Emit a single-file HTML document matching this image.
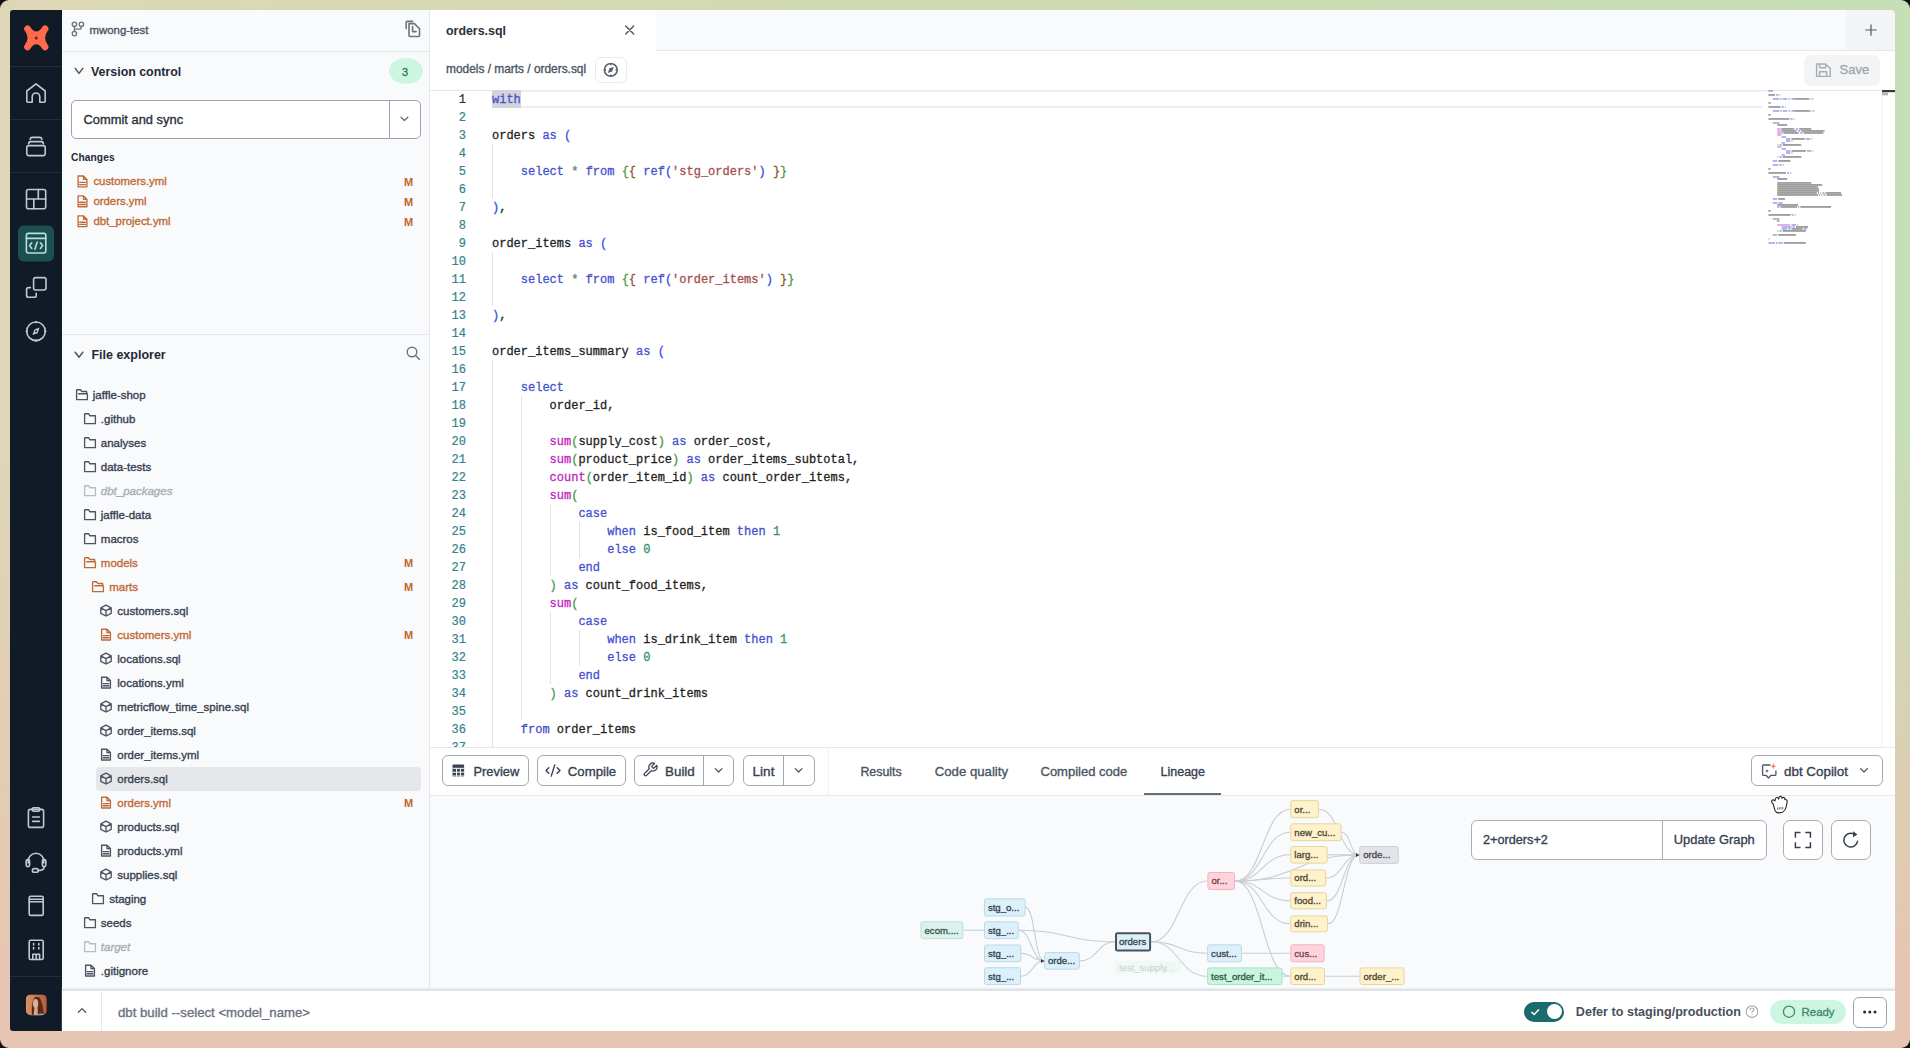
<!DOCTYPE html>
<html><head><meta charset="utf-8">
<style>
*{box-sizing:border-box;margin:0;padding:0}
html,body{width:1910px;height:1048px;overflow:hidden}
body{position:relative;font-family:"Liberation Sans",sans-serif;color:#1f2937;background:#111}
.bg{position:absolute;left:0;top:0;width:1910px;height:1048px;border-radius:9px;
background:linear-gradient(to bottom,rgba(230,198,178,0) 40%,#e6c6b2 92%),linear-gradient(to right,#ded7b6 0%,#cfdab2 50%,#c6dfb6 100%);}
.a{position:absolute}
.win{position:absolute;left:0;top:0;width:1910px;height:1048px;clip-path:inset(10px 15px 17px 10px round 3px 5px 4px 3px);}
.t{position:absolute;white-space:nowrap;line-height:24px;height:24px}
.sb{-webkit-text-stroke:0.35px currentColor}
.mono{font-family:"Liberation Mono",monospace}
svg{position:absolute;overflow:visible}
</style></head>
<body>
<div class="bg"></div>
<div class="win">
  <!-- sidebar -->
  <div class="a" style="left:10px;top:10px;width:52px;height:1021px;background:#111a27"></div>
  <!-- left panel -->
  <div class="a" style="left:62px;top:10px;width:368px;height:981px;background:#f9fafb;border-right:1px solid #e5e7eb"></div>
  <!-- tab bar -->
  <div class="a" style="left:430px;top:10px;width:1465px;height:41px;background:#f9fafb;border-bottom:1px solid #e5e7eb"></div>
  <div class="a" style="left:430px;top:10px;width:226px;height:41px;background:#fff"></div>
  <div class="a" style="left:1846px;top:10px;width:49px;height:40px;background:#f3f4f6"></div>
  <!-- breadcrumb row -->
  <div class="a" style="left:430px;top:51px;width:1465px;height:39px;background:#fff"></div>
  <!-- editor -->
  <div class="a" style="left:430px;top:90px;width:1465px;height:657px;background:#fff;border-top:1px solid #e5e7eb"></div>
  <!-- bottom toolbar -->
  <div class="a" style="left:430px;top:747px;width:1465px;height:49px;background:#fff;border-top:1px solid #e5e7eb;border-bottom:1px solid #e5e7eb"></div>
  <!-- lineage area -->
  <div class="a" style="left:430px;top:796px;width:1465px;height:195px;background:#f9fafb"></div>
  <!-- status bar -->
  <div class="a" style="left:62px;top:989px;width:1833px;height:42px;background:#fff;border-top:2px solid #e0e3e6;box-shadow:0 -1px 1px #eceef0"></div>

  <!-- sidebar icons -->
  <svg class="a" style="left:0;top:0" width="1910" height="1048" viewBox="0 0 1910 1048">
    <path d="M29.8,26.3 Q36.3,36.9 42.8,26.3 A3.4,3.4 0 0 1 47.6,31.1 Q42.6,37.9 47.6,44.7 A3.4,3.4 0 0 1 42.8,49.5 Q36.3,39.1 29.8,49.5 A3.4,3.4 0 0 1 25,44.7 Q30,37.9 25,31.1 A3.4,3.4 0 0 1 29.8,26.3 Z" fill="#fe6a4a"/>
    <circle cx="36.3" cy="38" r="1.6" fill="#6e2618"/>
    <g stroke="#222d3d" stroke-width="1">
      <line x1="10" y1="66.5" x2="62" y2="66.5"/><line x1="10" y1="119.5" x2="62" y2="119.5"/><line x1="10" y1="172.5" x2="62" y2="172.5"/><line x1="10" y1="976.5" x2="62" y2="976.5"/>
    </g>
    <rect x="18" y="225.5" width="36" height="36" rx="6" fill="#1c4f50"/>
    <g fill="none" stroke="#c3c7ce" stroke-width="1.6" stroke-linecap="round" stroke-linejoin="round">
      <path d="M26.8,91 L36,83.8 L45.2,91 L45.2,101.3 Q45.2,102.3 44.2,102.3 L39.8,102.3 L39.8,96.8 A3.8,3.8 0 0 0 32.2,96.8 L32.2,102.3 L27.8,102.3 Q26.8,102.3 26.8,101.3 Z"/>
      <rect x="26.8" y="145.6" width="18.4" height="10" rx="2"/>
      <path d="M28.6,144 Q28.6,141.6 31,141.6 L41,141.6 Q43.4,141.6 43.4,144"/>
      <path d="M30.2,139.6 Q30.2,137.4 32.4,137.4 L39.6,137.4 Q41.8,137.4 41.8,139.6"/>
      <rect x="26.5" y="189.5" width="19.2" height="19.2" rx="2"/>
      <path d="M26.5,199 L45.7,199 M38.3,189.5 L38.3,199 M33.8,199 L33.8,208.7"/>
      <rect x="33.6" y="277.6" width="12.4" height="12.4" rx="2"/>
      <path d="M30.4,287.6 L28.4,287.6 Q26.6,287.6 26.6,289.4 L26.6,295.4 Q26.6,297.2 28.4,297.2 L34.4,297.2 Q36.2,297.2 36.2,295.4 L36.2,293.4"/>
      <circle cx="36" cy="331.3" r="9.3"/>
      <rect x="28.4" y="809.4" width="15.2" height="18" rx="2"/>
      <rect x="32.2" y="807.8" width="7.6" height="3.4" rx="1.5"/>
      <path d="M32.6,817 L39.4,817 M32.6,821.4 L39.4,821.4"/>
      <path d="M28.2,863 L28.2,861 A7.8,7.8 0 0 1 43.8,861 L43.8,863"/>
      <rect x="26.2" y="859.6" width="3.4" height="7" rx="1.5"/>
      <rect x="42.4" y="859.6" width="3.4" height="7" rx="1.5"/>
      <path d="M44,866.6 Q44,870.4 40.2,870.4 L38.2,870.4"/>
      <rect x="32.4" y="868.6" width="5.8" height="3.6" rx="1.8"/>
      <rect x="29.2" y="896.2" width="14" height="19.2" rx="1.5"/>
      <path d="M29.2,899.2 L43.2,899.2 M29.2,901.8 L43.2,901.8"/>
      <rect x="29.2" y="940.3" width="14" height="19.2" rx="1.5"/>
      <path d="M33.6,943.5 L33.6,945 M33.6,947.5 L33.6,949 M38.8,943.5 L38.8,945 M38.8,947.5 L38.8,949 M32.8,959.4 L32.8,954.2 L39.6,954.2 L39.6,959.4 M36.2,954.2 L36.2,959.4"/>
    </g>
    <g fill="none" stroke="#b9dfdf" stroke-width="1.6" stroke-linecap="round" stroke-linejoin="round">
      <rect x="26.4" y="233.4" width="19.4" height="19.6" rx="2"/>
      <path d="M26.4,238.4 L45.8,238.4 M31.8,242.8 L29.6,245.6 L31.8,248.4 M40.4,242.8 L42.6,245.6 L40.4,248.4 M37.2,242 L34.9,249.2"/>
    </g>
    <path d="M39.6,327.6 L37.6,333.2 L32.4,335 L34.4,329.4 Z" fill="#c3c7ce"/>
    <circle cx="36" cy="331.3" r="1" fill="#111a27"/>
    <g fill="#c3c7ce"><rect x="35.2" y="321" width="1.6" height="2.2"/><rect x="35.2" y="339.4" width="1.6" height="2.2"/><rect x="25.7" y="330.5" width="2.2" height="1.6"/><rect x="44.1" y="330.5" width="2.2" height="1.6"/></g>
    <defs><linearGradient id="av" x1="0" y1="0" x2="1" y2="0"><stop offset="0" stop-color="#dc9262"/><stop offset="0.5" stop-color="#c97a50"/><stop offset="1" stop-color="#b8593a"/></linearGradient><clipPath id="avc"><rect x="25.8" y="994.4" width="21" height="20.8" rx="5"/></clipPath></defs>
    <g clip-path="url(#avc)">
    <rect x="25.8" y="994.4" width="21" height="20.8" fill="url(#av)"/>
    <path d="M32,1016 Q31,1004 34,998 Q37,995.5 40,998 Q43,1004 44,1016 Z" fill="#5a2a1c"/>
    <ellipse cx="35.6" cy="1003.5" rx="2.6" ry="4.6" fill="#ddb08e"/>
    <path d="M33.5,1016 L34.5,1007 L37.5,1007 L38,1016 Z" fill="#d7a88a"/>
    <ellipse cx="41" cy="1016" rx="4" ry="2.6" fill="#98a0b0"/>
    <ellipse cx="31" cy="1016.5" rx="3" ry="2" fill="#8f9cb0"/>
    </g>
  </svg>

  <!-- left panel content -->
  <div class="a" style="left:62px;top:50.5px;width:368px;height:1px;background:#e5e7eb"></div>
  <div class="a" style="left:62px;top:334px;width:368px;height:1px;background:#e5e7eb"></div>
  <div class="a" style="left:95.5px;top:767px;width:325px;height:23.5px;background:#e5e7eb;border-radius:4px"></div>
  <div class="t sb" style="left:89.5px;top:18px;font-size:11.4px;color:#4b5563">mwong-test</div>
  <div class="t" style="left:91px;top:60px;font-size:12.4px;font-weight:700;color:#1f2937">Version control</div>
  <div class="a" style="left:389px;top:58px;width:34px;height:26px;border-radius:50%;background:#cdf6e2"></div>
  <div class="t sb" style="left:402px;top:59.5px;font-size:11px;color:#2f7a5c">3</div>
  <div class="a" style="left:71px;top:99.5px;width:349.5px;height:39px;background:#fff;border:1.5px solid #9ca3af;border-radius:5px"></div>
  <div class="a" style="left:388.5px;top:100px;width:1.5px;height:38px;background:#9ca3af"></div>
  <div class="t sb" style="left:83.5px;top:108px;font-size:12.9px;color:#2b313a">Commit and sync</div>
  <div class="t" style="left:71px;top:145.5px;font-size:10.2px;font-weight:700;color:#1f2937;letter-spacing:0.1px">Changes</div>
  <div class="t" style="left:91.4px;top:343px;font-size:12.5px;font-weight:700;color:#1f2937">File explorer</div>
  <div class="t sb" style="left:92.8px;top:383.1px;font-size:11.5px;color:#374151;">jaffle-shop</div><div class="t sb" style="left:100.8px;top:407.1px;font-size:11.5px;color:#374151;">.github</div><div class="t sb" style="left:100.8px;top:431.1px;font-size:11.5px;color:#374151;">analyses</div><div class="t sb" style="left:100.8px;top:455.1px;font-size:11.5px;color:#374151;">data-tests</div><div class="t sb" style="left:100.8px;top:479.1px;font-size:11.5px;color:#a9aeb6;font-style:italic;">dbt_packages</div><div class="t sb" style="left:100.8px;top:503.1px;font-size:11.5px;color:#374151;">jaffle-data</div><div class="t sb" style="left:100.8px;top:527.1px;font-size:11.5px;color:#374151;">macros</div><div class="t sb" style="left:100.8px;top:551.1px;font-size:11.5px;color:#c06a36;">models</div><div class="t" style="left:404px;top:551.4px;font-size:11px;font-weight:700;color:#c0652c">M</div><div class="t sb" style="left:109.2px;top:575.1px;font-size:11.5px;color:#c06a36;">marts</div><div class="t" style="left:404px;top:575.4px;font-size:11px;font-weight:700;color:#c0652c">M</div><div class="t sb" style="left:117.3px;top:599.1px;font-size:11.5px;color:#374151;">customers.sql</div><div class="t sb" style="left:117.3px;top:623.1px;font-size:11.5px;color:#c06a36;">customers.yml</div><div class="t" style="left:404px;top:623.4px;font-size:11px;font-weight:700;color:#c0652c">M</div><div class="t sb" style="left:117.3px;top:647.1px;font-size:11.5px;color:#374151;">locations.sql</div><div class="t sb" style="left:117.3px;top:671.1px;font-size:11.5px;color:#374151;">locations.yml</div><div class="t sb" style="left:117.3px;top:695.1px;font-size:11.5px;color:#374151;">metricflow_time_spine.sql</div><div class="t sb" style="left:117.3px;top:719.1px;font-size:11.5px;color:#374151;">order_items.sql</div><div class="t sb" style="left:117.3px;top:743.1px;font-size:11.5px;color:#374151;">order_items.yml</div><div class="t sb" style="left:117.3px;top:767.1px;font-size:11.5px;color:#374151;">orders.sql</div><div class="t sb" style="left:117.3px;top:791.1px;font-size:11.5px;color:#c06a36;">orders.yml</div><div class="t" style="left:404px;top:791.4px;font-size:11px;font-weight:700;color:#c0652c">M</div><div class="t sb" style="left:117.3px;top:815.1px;font-size:11.5px;color:#374151;">products.sql</div><div class="t sb" style="left:117.3px;top:839.1px;font-size:11.5px;color:#374151;">products.yml</div><div class="t sb" style="left:117.3px;top:863.1px;font-size:11.5px;color:#374151;">supplies.sql</div><div class="t sb" style="left:109.2px;top:887.1px;font-size:11.5px;color:#374151;">staging</div><div class="t sb" style="left:100.8px;top:911.1px;font-size:11.5px;color:#374151;">seeds</div><div class="t sb" style="left:100.8px;top:935.1px;font-size:11.5px;color:#a9aeb6;font-style:italic;">target</div><div class="t sb" style="left:100.8px;top:959.1px;font-size:11.5px;color:#374151;">.gitignore</div><div class="t sb" style="left:93.4px;top:168.9px;font-size:11.4px;color:#c06a36">customers.yml</div><div class="t" style="left:404px;top:170.2px;font-size:11px;font-weight:700;color:#c0652c">M</div><div class="t sb" style="left:93.4px;top:188.8px;font-size:11.4px;color:#c06a36">orders.yml</div><div class="t" style="left:404px;top:190.1px;font-size:11px;font-weight:700;color:#c0652c">M</div><div class="t sb" style="left:93.4px;top:208.7px;font-size:11.4px;color:#c06a36">dbt_project.yml</div><div class="t" style="left:404px;top:210.0px;font-size:11px;font-weight:700;color:#c0652c">M</div>
  <svg class="a" style="left:0;top:0" width="1910" height="1048" viewBox="0 0 1910 1048">
    <g fill="none" stroke-width="1.35" stroke-linecap="round" stroke-linejoin="round">
      <path d="M76.6,399.6 L76.6,390.3 Q76.6,389.70000000000005 77.2,389.70000000000005 L80.5,389.70000000000005 L81.6,391.5 L86.6,391.5 L86.6,393.5 M78.6,393.70000000000005 L87.4,393.70000000000005 L87.4,399.6 L76.6,399.6" stroke="#4b5563"/><path d="M84.6,423.6 L84.6,414.3 Q84.6,413.70000000000005 85.2,413.70000000000005 L88.6,413.70000000000005 L89.8,415.70000000000005 L95.4,415.70000000000005 L95.4,423.6 Z" stroke="#4b5563"/><path d="M84.6,447.6 L84.6,438.3 Q84.6,437.70000000000005 85.2,437.70000000000005 L88.6,437.70000000000005 L89.8,439.70000000000005 L95.4,439.70000000000005 L95.4,447.6 Z" stroke="#4b5563"/><path d="M84.6,471.6 L84.6,462.3 Q84.6,461.70000000000005 85.2,461.70000000000005 L88.6,461.70000000000005 L89.8,463.70000000000005 L95.4,463.70000000000005 L95.4,471.6 Z" stroke="#4b5563"/><path d="M84.6,495.6 L84.6,486.3 Q84.6,485.70000000000005 85.2,485.70000000000005 L88.6,485.70000000000005 L89.8,487.70000000000005 L95.4,487.70000000000005 L95.4,495.6 Z" stroke="#b8bcc3"/><path d="M84.6,519.6 L84.6,510.3 Q84.6,509.70000000000005 85.2,509.70000000000005 L88.6,509.70000000000005 L89.8,511.70000000000005 L95.4,511.70000000000005 L95.4,519.6 Z" stroke="#4b5563"/><path d="M84.6,543.6 L84.6,534.3000000000001 Q84.6,533.7 85.2,533.7 L88.6,533.7 L89.8,535.7 L95.4,535.7 L95.4,543.6 Z" stroke="#4b5563"/><path d="M84.6,567.6 L84.6,558.3000000000001 Q84.6,557.7 85.2,557.7 L88.5,557.7 L89.6,559.5 L94.6,559.5 L94.6,561.5 M86.6,561.7 L95.4,561.7 L95.4,567.6 L84.6,567.6" stroke="#c06a36"/><path d="M92.6,591.6 L92.6,582.3000000000001 Q92.6,581.7 93.2,581.7 L96.5,581.7 L97.6,583.5 L102.6,583.5 L102.6,585.5 M94.6,585.7 L103.4,585.7 L103.4,591.6 L92.6,591.6" stroke="#c06a36"/><path d="M106,605.2 L111.2,607.9 L111.2,613.3000000000001 L106,616.0 L100.8,613.3000000000001 L100.8,607.9 Z M100.8,607.9 L106,610.6 L111.2,607.9 M106,610.6 L106,616.0" stroke="#4b5563"/><path d="M101.6,629.2 L107,629.2 L110.4,632.6 L110.4,640.0 L101.6,640.0 Z M107,629.2 L107,632.6 L110.4,632.6" stroke="#c06a36"/><path d="M103.2,635.6 L108.8,635.6 M103.2,637.8000000000001 L108.8,637.8000000000001" stroke="#c06a36" stroke-width="1.4"/><path d="M106,653.2 L111.2,655.9 L111.2,661.3000000000001 L106,664.0 L100.8,661.3000000000001 L100.8,655.9 Z M100.8,655.9 L106,658.6 L111.2,655.9 M106,658.6 L106,664.0" stroke="#4b5563"/><path d="M101.6,677.2 L107,677.2 L110.4,680.6 L110.4,688.0 L101.6,688.0 Z M107,677.2 L107,680.6 L110.4,680.6" stroke="#4b5563"/><path d="M103.2,683.6 L108.8,683.6 M103.2,685.8000000000001 L108.8,685.8000000000001" stroke="#4b5563" stroke-width="1.4"/><path d="M106,701.2 L111.2,703.9 L111.2,709.3000000000001 L106,712.0 L100.8,709.3000000000001 L100.8,703.9 Z M100.8,703.9 L106,706.6 L111.2,703.9 M106,706.6 L106,712.0" stroke="#4b5563"/><path d="M106,725.2 L111.2,727.9 L111.2,733.3000000000001 L106,736.0 L100.8,733.3000000000001 L100.8,727.9 Z M100.8,727.9 L106,730.6 L111.2,727.9 M106,730.6 L106,736.0" stroke="#4b5563"/><path d="M101.6,749.2 L107,749.2 L110.4,752.6 L110.4,760.0 L101.6,760.0 Z M107,749.2 L107,752.6 L110.4,752.6" stroke="#4b5563"/><path d="M103.2,755.6 L108.8,755.6 M103.2,757.8000000000001 L108.8,757.8000000000001" stroke="#4b5563" stroke-width="1.4"/><path d="M106,773.2 L111.2,775.9 L111.2,781.3000000000001 L106,784.0 L100.8,781.3000000000001 L100.8,775.9 Z M100.8,775.9 L106,778.6 L111.2,775.9 M106,778.6 L106,784.0" stroke="#4b5563"/><path d="M101.6,797.2 L107,797.2 L110.4,800.6 L110.4,808.0 L101.6,808.0 Z M107,797.2 L107,800.6 L110.4,800.6" stroke="#c06a36"/><path d="M103.2,803.6 L108.8,803.6 M103.2,805.8000000000001 L108.8,805.8000000000001" stroke="#c06a36" stroke-width="1.4"/><path d="M106,821.2 L111.2,823.9 L111.2,829.3000000000001 L106,832.0 L100.8,829.3000000000001 L100.8,823.9 Z M100.8,823.9 L106,826.6 L111.2,823.9 M106,826.6 L106,832.0" stroke="#4b5563"/><path d="M101.6,845.2 L107,845.2 L110.4,848.6 L110.4,856.0 L101.6,856.0 Z M107,845.2 L107,848.6 L110.4,848.6" stroke="#4b5563"/><path d="M103.2,851.6 L108.8,851.6 M103.2,853.8000000000001 L108.8,853.8000000000001" stroke="#4b5563" stroke-width="1.4"/><path d="M106,869.2 L111.2,871.9 L111.2,877.3000000000001 L106,880.0 L100.8,877.3000000000001 L100.8,871.9 Z M100.8,871.9 L106,874.6 L111.2,871.9 M106,874.6 L106,880.0" stroke="#4b5563"/><path d="M92.6,903.6 L92.6,894.3000000000001 Q92.6,893.7 93.2,893.7 L96.6,893.7 L97.8,895.7 L103.4,895.7 L103.4,903.6 Z" stroke="#4b5563"/><path d="M84.6,927.6 L84.6,918.3000000000001 Q84.6,917.7 85.2,917.7 L88.6,917.7 L89.8,919.7 L95.4,919.7 L95.4,927.6 Z" stroke="#4b5563"/><path d="M84.6,951.6 L84.6,942.3000000000001 Q84.6,941.7 85.2,941.7 L88.6,941.7 L89.8,943.7 L95.4,943.7 L95.4,951.6 Z" stroke="#b8bcc3"/><path d="M85.6,965.2 L91,965.2 L94.4,968.6 L94.4,976.0 L85.6,976.0 Z M91,965.2 L91,968.6 L94.4,968.6" stroke="#4b5563"/><path d="M87.2,971.6 L92.8,971.6 M87.2,973.8000000000001 L92.8,973.8000000000001" stroke="#4b5563" stroke-width="1.4"/><path d="M78.1,176.0 L83.5,176.0 L86.9,179.4 L86.9,186.8 L78.1,186.8 Z M83.5,176.0 L83.5,179.4 L86.9,179.4" stroke="#c06a36"/><path d="M79.7,182.4 L85.3,182.4 M79.7,184.6 L85.3,184.6" stroke="#c06a36" stroke-width="1.4"/><path d="M78.1,195.9 L83.5,195.9 L86.9,199.3 L86.9,206.70000000000002 L78.1,206.70000000000002 Z M83.5,195.9 L83.5,199.3 L86.9,199.3" stroke="#c06a36"/><path d="M79.7,202.3 L85.3,202.3 M79.7,204.5 L85.3,204.5" stroke="#c06a36" stroke-width="1.4"/><path d="M78.1,215.79999999999998 L83.5,215.79999999999998 L86.9,219.2 L86.9,226.6 L78.1,226.6 Z M83.5,215.79999999999998 L83.5,219.2 L86.9,219.2" stroke="#c06a36"/><path d="M79.7,222.2 L85.3,222.2 M79.7,224.39999999999998 L85.3,224.39999999999998" stroke="#c06a36" stroke-width="1.4"/>
    </g>
    <g fill="none" stroke="#6b7280" stroke-width="1.3" stroke-linecap="round" stroke-linejoin="round">
      <circle cx="74.4" cy="24.3" r="2.2"/><circle cx="81.4" cy="24.3" r="2.2"/><circle cx="74.4" cy="33.6" r="2.2"/>
      <path d="M74.4,26.5 L74.4,31.4 M74.4,29.2 L79.6,29.2 Q81.4,29.2 81.4,26.5"/>
      <path d="M406.2,28.6 L406.2,22.4 Q406.2,21.4 407.2,21.4 L412.6,21.4" stroke-width="1.6"/>
      <path d="M409,23.6 L414.4,23.6 L419.5,28.7 L419.5,35.6 Q419.5,36.5 418.6,36.5 L410,36.5 Q409,36.5 409,35.6 Z" stroke-width="1.6"/>
      <path d="M412.6,26.6 L412.6,31.6 L416.2,31.6" stroke-width="1.6"/>
    </g>
    <g fill="none" stroke="#4b5563" stroke-width="1.4" stroke-linecap="round" stroke-linejoin="round">
      <path d="M75.2,68.4 L79,73.4 L82.8,68.4" stroke-width="1.5"/>
      <path d="M75.2,352.2 L79,357.2 L82.8,352.2" stroke-width="1.5"/>
      <path d="M401,117.2 L404.4,120.6 L407.8,117.2" stroke="#6b7280"/>
      <circle cx="412" cy="352" r="4.8" stroke="#6b7280"/><path d="M415.5,355.6 L419.5,359.6" stroke="#6b7280"/>
    </g>
  </svg>

  <!-- tab + breadcrumb -->
  <div class="t" style="left:446px;top:19px;font-size:12.4px;font-weight:700;color:#2b3038">orders.sql</div>
  <svg class="a" style="left:0;top:0" width="1910" height="1048"><g stroke="#4b5563" stroke-width="1.4" stroke-linecap="round"><path d="M625.7,26 L633.7,34 M633.7,26 L625.7,34"/><path d="M1871,24.8 L1871,35.2 M1865.8,30 L1876.2,30" stroke="#505865" stroke-width="1.2"/></g></svg>
  <div class="t sb" style="left:446px;top:57px;font-size:11.9px;color:#4b5563">models / marts / orders.sql</div>
  <div class="a" style="left:595px;top:57px;width:31.5px;height:25.5px;border:1px solid #e8eaee;border-radius:6px;background:#fff"></div>
  <svg class="a" style="left:0;top:0" width="1910" height="1048"><g fill="none" stroke="#5b6370" stroke-width="1.6"><circle cx="610.8" cy="69.9" r="6.4"/></g><path d="M613.8,66.9 L612.2,71.6 L607.8,72.9 L609.4,68.2 Z" fill="#5b6370"/><g fill="#5b6370"><rect x="610" y="63" width="1.6" height="2.2"/><rect x="610" y="74.6" width="1.6" height="2.2"/><rect x="603.9" y="69.1" width="2.2" height="1.6"/><rect x="615.5" y="69.1" width="2.2" height="1.6"/></g></svg>
  <div class="a" style="left:1803.5px;top:54.5px;width:76.5px;height:31.5px;background:#f3f4f6;border-radius:7px"></div>
  <svg class="a" style="left:0;top:0" width="1910" height="1048"><g fill="none" stroke="#a8adb5" stroke-width="1.4" stroke-linejoin="round"><path d="M1816.6,64 L1825.6,64 L1830.2,68.6 L1830.2,76.4 L1816.6,76.4 Z M1819.6,64 L1819.6,67.8 L1825.6,67.8 L1825.6,64 M1819.6,76.4 L1819.6,71.8 L1826.6,71.8 L1826.6,76.4"/></g></svg>
  <div class="t sb" style="left:1839.6px;top:58px;font-size:13px;color:#a0a5ad">Save</div>
  <!-- editor -->
<div class="a" style="left:0;top:0;width:1910px;height:747px;overflow:hidden">
  <style>
  .cl{position:absolute;left:492px;margin-top:1px;-webkit-text-stroke:0.3px currentColor;height:18px;line-height:18px;font-family:"Liberation Mono",monospace;font-size:12px;white-space:pre;color:#1f1f1f}
  .ln{position:absolute;left:430px;margin-top:1px;-webkit-text-stroke:0.2px currentColor;width:36px;text-align:right;height:18px;line-height:18px;font-family:"Liberation Mono",monospace;font-size:12px}
  </style>
  <div class="a" style="left:492px;top:90px;width:1270px;height:17.5px;border-top:2px solid #eeeeee;border-bottom:2px solid #eeeeee"></div>
  <div class="a" style="left:491.8px;top:90px;width:29px;height:17.7px;background:#d3d4da"></div>
  <div class="a" style="left:492px;top:144px;width:1px;height:54px;background:#e3e3e3"></div><div class="a" style="left:492px;top:252px;width:1px;height:54px;background:#e3e3e3"></div><div class="a" style="left:492px;top:360px;width:1px;height:396px;background:#e3e3e3"></div><div class="a" style="left:521px;top:396px;width:1px;height:324px;background:#e3e3e3"></div><div class="a" style="left:550px;top:504px;width:1px;height:72px;background:#e3e3e3"></div><div class="a" style="left:550px;top:612px;width:1px;height:72px;background:#e3e3e3"></div><div class="a" style="left:579px;top:522px;width:1px;height:36px;background:#e3e3e3"></div><div class="a" style="left:579px;top:630px;width:1px;height:36px;background:#e3e3e3"></div>
  <div class="ln" style="top:90px;color:#2a2a2a">1</div><div class="ln" style="top:108px;color:#34818e">2</div><div class="ln" style="top:126px;color:#34818e">3</div><div class="ln" style="top:144px;color:#34818e">4</div><div class="ln" style="top:162px;color:#34818e">5</div><div class="ln" style="top:180px;color:#34818e">6</div><div class="ln" style="top:198px;color:#34818e">7</div><div class="ln" style="top:216px;color:#34818e">8</div><div class="ln" style="top:234px;color:#34818e">9</div><div class="ln" style="top:252px;color:#34818e">10</div><div class="ln" style="top:270px;color:#34818e">11</div><div class="ln" style="top:288px;color:#34818e">12</div><div class="ln" style="top:306px;color:#34818e">13</div><div class="ln" style="top:324px;color:#34818e">14</div><div class="ln" style="top:342px;color:#34818e">15</div><div class="ln" style="top:360px;color:#34818e">16</div><div class="ln" style="top:378px;color:#34818e">17</div><div class="ln" style="top:396px;color:#34818e">18</div><div class="ln" style="top:414px;color:#34818e">19</div><div class="ln" style="top:432px;color:#34818e">20</div><div class="ln" style="top:450px;color:#34818e">21</div><div class="ln" style="top:468px;color:#34818e">22</div><div class="ln" style="top:486px;color:#34818e">23</div><div class="ln" style="top:504px;color:#34818e">24</div><div class="ln" style="top:522px;color:#34818e">25</div><div class="ln" style="top:540px;color:#34818e">26</div><div class="ln" style="top:558px;color:#34818e">27</div><div class="ln" style="top:576px;color:#34818e">28</div><div class="ln" style="top:594px;color:#34818e">29</div><div class="ln" style="top:612px;color:#34818e">30</div><div class="ln" style="top:630px;color:#34818e">31</div><div class="ln" style="top:648px;color:#34818e">32</div><div class="ln" style="top:666px;color:#34818e">33</div><div class="ln" style="top:684px;color:#34818e">34</div><div class="ln" style="top:702px;color:#34818e">35</div><div class="ln" style="top:720px;color:#34818e">36</div><div class="ln" style="top:738px;color:#34818e">37</div>
  <div class="cl" style="top:90px"><span style="color:#4651cf">with</span></div><div class="cl" style="top:108px"></div><div class="cl" style="top:126px"><span style="color:#1f1f1f">orders </span><span style="color:#4651cf">as</span><span style="color:#1f1f1f"> </span><span style="color:#3653e6">(</span></div><div class="cl" style="top:144px"></div><div class="cl" style="top:162px"><span style="color:#1f1f1f">    </span><span style="color:#4651cf">select</span><span style="color:#1f1f1f"> </span><span style="color:#777777">*</span><span style="color:#1f1f1f"> </span><span style="color:#4651cf">from</span><span style="color:#1f1f1f"> </span><span style="color:#4a9a4a">{</span><span style="color:#8a5a2a">{</span><span style="color:#1f1f1f"> </span><span style="color:#4651cf">ref</span><span style="color:#3653e6">(</span><span style="color:#a3504a">&#x27;stg_orders&#x27;</span><span style="color:#3653e6">)</span><span style="color:#1f1f1f"> </span><span style="color:#8a5a2a">}</span><span style="color:#4a9a4a">}</span></div><div class="cl" style="top:180px"></div><div class="cl" style="top:198px"><span style="color:#3653e6">)</span><span style="color:#1f1f1f">,</span></div><div class="cl" style="top:216px"></div><div class="cl" style="top:234px"><span style="color:#1f1f1f">order_items </span><span style="color:#4651cf">as</span><span style="color:#1f1f1f"> </span><span style="color:#3653e6">(</span></div><div class="cl" style="top:252px"></div><div class="cl" style="top:270px"><span style="color:#1f1f1f">    </span><span style="color:#4651cf">select</span><span style="color:#1f1f1f"> </span><span style="color:#777777">*</span><span style="color:#1f1f1f"> </span><span style="color:#4651cf">from</span><span style="color:#1f1f1f"> </span><span style="color:#4a9a4a">{</span><span style="color:#8a5a2a">{</span><span style="color:#1f1f1f"> </span><span style="color:#4651cf">ref</span><span style="color:#3653e6">(</span><span style="color:#a3504a">&#x27;order_items&#x27;</span><span style="color:#3653e6">)</span><span style="color:#1f1f1f"> </span><span style="color:#8a5a2a">}</span><span style="color:#4a9a4a">}</span></div><div class="cl" style="top:288px"></div><div class="cl" style="top:306px"><span style="color:#3653e6">)</span><span style="color:#1f1f1f">,</span></div><div class="cl" style="top:324px"></div><div class="cl" style="top:342px"><span style="color:#1f1f1f">order_items_summary </span><span style="color:#4651cf">as</span><span style="color:#1f1f1f"> </span><span style="color:#3653e6">(</span></div><div class="cl" style="top:360px"></div><div class="cl" style="top:378px"><span style="color:#1f1f1f">    </span><span style="color:#4651cf">select</span></div><div class="cl" style="top:396px"><span style="color:#1f1f1f">        order_id,</span></div><div class="cl" style="top:414px"></div><div class="cl" style="top:432px"><span style="color:#1f1f1f">        </span><span style="color:#c028c0">sum</span><span style="color:#4a9a4a">(</span><span style="color:#1f1f1f">supply_cost</span><span style="color:#4a9a4a">)</span><span style="color:#1f1f1f"> </span><span style="color:#4651cf">as</span><span style="color:#1f1f1f"> order_cost,</span></div><div class="cl" style="top:450px"><span style="color:#1f1f1f">        </span><span style="color:#c028c0">sum</span><span style="color:#4a9a4a">(</span><span style="color:#1f1f1f">product_price</span><span style="color:#4a9a4a">)</span><span style="color:#1f1f1f"> </span><span style="color:#4651cf">as</span><span style="color:#1f1f1f"> order_items_subtotal,</span></div><div class="cl" style="top:468px"><span style="color:#1f1f1f">        </span><span style="color:#c028c0">count</span><span style="color:#4a9a4a">(</span><span style="color:#1f1f1f">order_item_id</span><span style="color:#4a9a4a">)</span><span style="color:#1f1f1f"> </span><span style="color:#4651cf">as</span><span style="color:#1f1f1f"> count_order_items,</span></div><div class="cl" style="top:486px"><span style="color:#1f1f1f">        </span><span style="color:#c028c0">sum</span><span style="color:#4a9a4a">(</span></div><div class="cl" style="top:504px"><span style="color:#1f1f1f">            </span><span style="color:#4651cf">case</span></div><div class="cl" style="top:522px"><span style="color:#1f1f1f">                </span><span style="color:#4651cf">when</span><span style="color:#1f1f1f"> is_food_item </span><span style="color:#4651cf">then</span><span style="color:#1f1f1f"> </span><span style="color:#3a9070">1</span></div><div class="cl" style="top:540px"><span style="color:#1f1f1f">                </span><span style="color:#4651cf">else</span><span style="color:#1f1f1f"> </span><span style="color:#3a9070">0</span></div><div class="cl" style="top:558px"><span style="color:#1f1f1f">            </span><span style="color:#4651cf">end</span></div><div class="cl" style="top:576px"><span style="color:#1f1f1f">        </span><span style="color:#4a9a4a">)</span><span style="color:#1f1f1f"> </span><span style="color:#4651cf">as</span><span style="color:#1f1f1f"> count_food_items,</span></div><div class="cl" style="top:594px"><span style="color:#1f1f1f">        </span><span style="color:#c028c0">sum</span><span style="color:#4a9a4a">(</span></div><div class="cl" style="top:612px"><span style="color:#1f1f1f">            </span><span style="color:#4651cf">case</span></div><div class="cl" style="top:630px"><span style="color:#1f1f1f">                </span><span style="color:#4651cf">when</span><span style="color:#1f1f1f"> is_drink_item </span><span style="color:#4651cf">then</span><span style="color:#1f1f1f"> </span><span style="color:#3a9070">1</span></div><div class="cl" style="top:648px"><span style="color:#1f1f1f">                </span><span style="color:#4651cf">else</span><span style="color:#1f1f1f"> </span><span style="color:#3a9070">0</span></div><div class="cl" style="top:666px"><span style="color:#1f1f1f">            </span><span style="color:#4651cf">end</span></div><div class="cl" style="top:684px"><span style="color:#1f1f1f">        </span><span style="color:#4a9a4a">)</span><span style="color:#1f1f1f"> </span><span style="color:#4651cf">as</span><span style="color:#1f1f1f"> count_drink_items</span></div><div class="cl" style="top:702px"></div><div class="cl" style="top:720px"><span style="color:#1f1f1f">    </span><span style="color:#4651cf">from</span><span style="color:#1f1f1f"> order_items</span></div><div class="cl" style="top:738px"></div>


</div>
  <!-- minimap -->
  <svg class="a" style="left:0;top:0" width="1910" height="1048"><g opacity="0.6"><rect x="1768.4" y="90.2" width="4.4" height="1.5" fill="#5a60d8"/><rect x="1768.4" y="94.2" width="6.6" height="1.5" fill="#3a3a3a"/><rect x="1776.1" y="94.2" width="2.2" height="1.5" fill="#5a60d8"/><rect x="1779.4" y="94.2" width="1.1" height="1.5" fill="#7a8ad0"/><rect x="1772.8" y="98.2" width="6.6" height="1.5" fill="#5a60d8"/><rect x="1780.5" y="98.2" width="1.1" height="1.5" fill="#3a3a3a"/><rect x="1782.7" y="98.2" width="4.4" height="1.5" fill="#5a60d8"/><rect x="1788.2" y="98.2" width="2.2" height="1.5" fill="#7a8ad0"/><rect x="1791.5" y="98.2" width="3.3" height="1.5" fill="#5a60d8"/><rect x="1794.8" y="98.2" width="2.2" height="1.5" fill="#3a3a3a"/><rect x="1797.0" y="98.2" width="11.0" height="1.5" fill="#3a3a3a"/><rect x="1808.0" y="98.2" width="2.2" height="1.5" fill="#b06060"/><rect x="1811.3" y="98.2" width="2.2" height="1.5" fill="#7a8ad0"/><rect x="1768.4" y="102.2" width="2.2" height="1.5" fill="#3a3a3a"/><rect x="1768.4" y="106.2" width="12.1" height="1.5" fill="#3a3a3a"/><rect x="1781.6" y="106.2" width="2.2" height="1.5" fill="#5a60d8"/><rect x="1784.9" y="106.2" width="1.1" height="1.5" fill="#7a8ad0"/><rect x="1772.8" y="110.2" width="6.6" height="1.5" fill="#5a60d8"/><rect x="1780.5" y="110.2" width="1.1" height="1.5" fill="#3a3a3a"/><rect x="1782.7" y="110.2" width="4.4" height="1.5" fill="#5a60d8"/><rect x="1788.2" y="110.2" width="2.2" height="1.5" fill="#7a8ad0"/><rect x="1791.5" y="110.2" width="3.3" height="1.5" fill="#5a60d8"/><rect x="1794.8" y="110.2" width="2.2" height="1.5" fill="#3a3a3a"/><rect x="1797.0" y="110.2" width="12.1" height="1.5" fill="#3a3a3a"/><rect x="1809.1" y="110.2" width="2.2" height="1.5" fill="#b06060"/><rect x="1812.4" y="110.2" width="2.2" height="1.5" fill="#7a8ad0"/><rect x="1768.4" y="114.2" width="2.2" height="1.5" fill="#3a3a3a"/><rect x="1768.4" y="118.2" width="20.9" height="1.5" fill="#3a3a3a"/><rect x="1790.4" y="118.2" width="2.2" height="1.5" fill="#5a60d8"/><rect x="1793.7" y="118.2" width="1.1" height="1.5" fill="#7a8ad0"/><rect x="1772.8" y="122.2" width="6.6" height="1.5" fill="#5a60d8"/><rect x="1777.2" y="124.2" width="8.8" height="1.5" fill="#3a3a3a"/><rect x="1786.0" y="124.2" width="1.1" height="1.5" fill="#3a3a3a"/><rect x="1777.2" y="128.2" width="3.3" height="1.5" fill="#c050c0"/><rect x="1780.5" y="128.2" width="1.1" height="1.5" fill="#7a8ad0"/><rect x="1781.6" y="128.2" width="12.1" height="1.5" fill="#3a3a3a"/><rect x="1793.7" y="128.2" width="1.1" height="1.5" fill="#7a8ad0"/><rect x="1795.9" y="128.2" width="2.2" height="1.5" fill="#5a60d8"/><rect x="1799.2" y="128.2" width="11.0" height="1.5" fill="#3a3a3a"/><rect x="1810.2" y="128.2" width="1.1" height="1.5" fill="#3a3a3a"/><rect x="1777.2" y="130.2" width="3.3" height="1.5" fill="#c050c0"/><rect x="1780.5" y="130.2" width="1.1" height="1.5" fill="#7a8ad0"/><rect x="1781.6" y="130.2" width="14.3" height="1.5" fill="#3a3a3a"/><rect x="1795.9" y="130.2" width="1.1" height="1.5" fill="#7a8ad0"/><rect x="1798.1" y="130.2" width="2.2" height="1.5" fill="#5a60d8"/><rect x="1801.4" y="130.2" width="22.0" height="1.5" fill="#3a3a3a"/><rect x="1823.4" y="130.2" width="1.1" height="1.5" fill="#3a3a3a"/><rect x="1777.2" y="132.2" width="5.5" height="1.5" fill="#c050c0"/><rect x="1782.7" y="132.2" width="1.1" height="1.5" fill="#7a8ad0"/><rect x="1783.8" y="132.2" width="14.3" height="1.5" fill="#3a3a3a"/><rect x="1798.1" y="132.2" width="1.1" height="1.5" fill="#7a8ad0"/><rect x="1800.3" y="132.2" width="2.2" height="1.5" fill="#5a60d8"/><rect x="1803.6" y="132.2" width="18.7" height="1.5" fill="#3a3a3a"/><rect x="1822.3" y="132.2" width="1.1" height="1.5" fill="#3a3a3a"/><rect x="1777.2" y="134.2" width="3.3" height="1.5" fill="#c050c0"/><rect x="1780.5" y="134.2" width="1.1" height="1.5" fill="#7a8ad0"/><rect x="1781.6" y="136.2" width="4.4" height="1.5" fill="#5a60d8"/><rect x="1786.0" y="138.2" width="4.4" height="1.5" fill="#5a60d8"/><rect x="1791.5" y="138.2" width="13.2" height="1.5" fill="#3a3a3a"/><rect x="1805.8" y="138.2" width="4.4" height="1.5" fill="#5a60d8"/><rect x="1811.3" y="138.2" width="1.1" height="1.5" fill="#50a080"/><rect x="1786.0" y="140.2" width="4.4" height="1.5" fill="#5a60d8"/><rect x="1791.5" y="140.2" width="1.1" height="1.5" fill="#50a080"/><rect x="1781.6" y="142.2" width="3.3" height="1.5" fill="#5a60d8"/><rect x="1777.2" y="144.2" width="1.1" height="1.5" fill="#7a8ad0"/><rect x="1779.4" y="144.2" width="2.2" height="1.5" fill="#5a60d8"/><rect x="1782.7" y="144.2" width="17.6" height="1.5" fill="#3a3a3a"/><rect x="1800.3" y="144.2" width="1.1" height="1.5" fill="#3a3a3a"/><rect x="1777.2" y="146.2" width="3.3" height="1.5" fill="#c050c0"/><rect x="1780.5" y="146.2" width="1.1" height="1.5" fill="#7a8ad0"/><rect x="1781.6" y="148.2" width="4.4" height="1.5" fill="#5a60d8"/><rect x="1786.0" y="150.2" width="4.4" height="1.5" fill="#5a60d8"/><rect x="1791.5" y="150.2" width="14.3" height="1.5" fill="#3a3a3a"/><rect x="1806.9" y="150.2" width="4.4" height="1.5" fill="#5a60d8"/><rect x="1812.4" y="150.2" width="1.1" height="1.5" fill="#50a080"/><rect x="1786.0" y="152.2" width="4.4" height="1.5" fill="#5a60d8"/><rect x="1791.5" y="152.2" width="1.1" height="1.5" fill="#50a080"/><rect x="1781.6" y="154.2" width="3.3" height="1.5" fill="#5a60d8"/><rect x="1777.2" y="156.2" width="1.1" height="1.5" fill="#7a8ad0"/><rect x="1779.4" y="156.2" width="2.2" height="1.5" fill="#5a60d8"/><rect x="1782.7" y="156.2" width="18.7" height="1.5" fill="#3a3a3a"/><rect x="1772.8" y="160.2" width="4.4" height="1.5" fill="#5a60d8"/><rect x="1778.3" y="160.2" width="12.1" height="1.5" fill="#3a3a3a"/><rect x="1772.8" y="164.2" width="5.5" height="1.5" fill="#5a60d8"/><rect x="1779.4" y="164.2" width="2.2" height="1.5" fill="#5a60d8"/><rect x="1782.7" y="164.2" width="1.1" height="1.5" fill="#50a080"/><rect x="1768.4" y="168.2" width="2.2" height="1.5" fill="#3a3a3a"/><rect x="1768.4" y="172.2" width="17.6" height="1.5" fill="#3a3a3a"/><rect x="1787.1" y="172.2" width="2.2" height="1.5" fill="#5a60d8"/><rect x="1790.4" y="172.2" width="1.1" height="1.5" fill="#7a8ad0"/><rect x="1772.8" y="176.2" width="6.6" height="1.5" fill="#5a60d8"/><rect x="1777.2" y="178.2" width="8.8" height="1.5" fill="#3a3a3a"/><rect x="1786.0" y="178.2" width="1.1" height="1.5" fill="#3a3a3a"/><rect x="1777.2" y="182.2" width="33.0" height="1.5" fill="#3a3a3a"/><rect x="1810.2" y="182.2" width="1.1" height="1.5" fill="#3a3a3a"/><rect x="1777.2" y="184.2" width="44.0" height="1.5" fill="#3a3a3a"/><rect x="1821.2" y="184.2" width="1.1" height="1.5" fill="#3a3a3a"/><rect x="1777.2" y="186.2" width="39.6" height="1.5" fill="#3a3a3a"/><rect x="1816.8" y="186.2" width="1.1" height="1.5" fill="#3a3a3a"/><rect x="1777.2" y="188.2" width="40.7" height="1.5" fill="#3a3a3a"/><rect x="1817.9" y="188.2" width="1.1" height="1.5" fill="#3a3a3a"/><rect x="1777.2" y="190.2" width="40.7" height="1.5" fill="#3a3a3a"/><rect x="1817.9" y="190.2" width="1.1" height="1.5" fill="#3a3a3a"/><rect x="1777.2" y="192.2" width="39.6" height="1.5" fill="#3a3a3a"/><rect x="1817.9" y="192.2" width="1.1" height="1.5" fill="#3a3a3a"/><rect x="1820.1" y="192.2" width="1.1" height="1.5" fill="#50a080"/><rect x="1822.3" y="192.2" width="2.2" height="1.5" fill="#5a60d8"/><rect x="1825.6" y="192.2" width="14.3" height="1.5" fill="#3a3a3a"/><rect x="1839.9" y="192.2" width="1.1" height="1.5" fill="#3a3a3a"/><rect x="1777.2" y="194.2" width="40.7" height="1.5" fill="#3a3a3a"/><rect x="1819.0" y="194.2" width="1.1" height="1.5" fill="#3a3a3a"/><rect x="1821.2" y="194.2" width="1.1" height="1.5" fill="#50a080"/><rect x="1823.4" y="194.2" width="2.2" height="1.5" fill="#5a60d8"/><rect x="1826.7" y="194.2" width="15.4" height="1.5" fill="#3a3a3a"/><rect x="1772.8" y="198.2" width="4.4" height="1.5" fill="#5a60d8"/><rect x="1778.3" y="198.2" width="6.6" height="1.5" fill="#3a3a3a"/><rect x="1772.8" y="202.2" width="4.4" height="1.5" fill="#5a60d8"/><rect x="1778.3" y="202.2" width="4.4" height="1.5" fill="#5a60d8"/><rect x="1777.2" y="204.2" width="20.9" height="1.5" fill="#3a3a3a"/><rect x="1777.2" y="206.2" width="2.2" height="1.5" fill="#5a60d8"/><rect x="1780.5" y="206.2" width="16.5" height="1.5" fill="#3a3a3a"/><rect x="1798.1" y="206.2" width="1.1" height="1.5" fill="#3a3a3a"/><rect x="1800.3" y="206.2" width="30.8" height="1.5" fill="#3a3a3a"/><rect x="1768.4" y="210.2" width="2.2" height="1.5" fill="#3a3a3a"/><rect x="1768.4" y="214.2" width="22.0" height="1.5" fill="#3a3a3a"/><rect x="1791.5" y="214.2" width="2.2" height="1.5" fill="#5a60d8"/><rect x="1794.8" y="214.2" width="1.1" height="1.5" fill="#7a8ad0"/><rect x="1772.8" y="218.2" width="6.6" height="1.5" fill="#5a60d8"/><rect x="1777.2" y="220.2" width="2.2" height="1.5" fill="#3a3a3a"/><rect x="1777.2" y="224.2" width="11.0" height="1.5" fill="#c050c0"/><rect x="1788.2" y="224.2" width="2.2" height="1.5" fill="#7a8ad0"/><rect x="1791.5" y="224.2" width="4.4" height="1.5" fill="#5a60d8"/><rect x="1797.0" y="224.2" width="1.1" height="1.5" fill="#7a8ad0"/><rect x="1781.6" y="226.2" width="9.9" height="1.5" fill="#5a60d8"/><rect x="1792.6" y="226.2" width="2.2" height="1.5" fill="#5a60d8"/><rect x="1795.9" y="226.2" width="12.1" height="1.5" fill="#3a3a3a"/><rect x="1781.6" y="228.2" width="5.5" height="1.5" fill="#5a60d8"/><rect x="1788.2" y="228.2" width="2.2" height="1.5" fill="#5a60d8"/><rect x="1791.5" y="228.2" width="11.0" height="1.5" fill="#3a3a3a"/><rect x="1803.6" y="228.2" width="3.3" height="1.5" fill="#5a60d8"/><rect x="1777.2" y="230.2" width="1.1" height="1.5" fill="#7a8ad0"/><rect x="1779.4" y="230.2" width="2.2" height="1.5" fill="#5a60d8"/><rect x="1782.7" y="230.2" width="23.1" height="1.5" fill="#3a3a3a"/><rect x="1772.8" y="234.2" width="4.4" height="1.5" fill="#5a60d8"/><rect x="1778.3" y="234.2" width="17.6" height="1.5" fill="#3a3a3a"/><rect x="1768.4" y="238.2" width="1.1" height="1.5" fill="#7a8ad0"/><rect x="1768.4" y="242.2" width="6.6" height="1.5" fill="#5a60d8"/><rect x="1776.1" y="242.2" width="1.1" height="1.5" fill="#3a3a3a"/><rect x="1778.3" y="242.2" width="4.4" height="1.5" fill="#5a60d8"/><rect x="1783.8" y="242.2" width="22.0" height="1.5" fill="#3a3a3a"/></g>
    <rect x="1881.5" y="90" width="1" height="657" fill="#efefef"/>
    <rect x="1882" y="90" width="13" height="2.2" fill="#3a3a3a"/>
    <rect x="1882" y="92.2" width="6" height="3.2" fill="#b8b8b8"/>
  </svg>
  <!-- bottom toolbar -->
  <style>
  .btn{position:absolute;background:#fff;border:1.5px solid #a4a9b1;border-radius:6px}
  .vd{position:absolute;width:1.5px;background:#a4a9b1}
  </style>
  <div class="btn" style="left:442px;top:754.5px;width:86.5px;height:31.5px"></div>
  <div class="btn" style="left:537px;top:754.5px;width:89px;height:31.5px"></div>
  <div class="btn" style="left:634px;top:754.5px;width:100px;height:31.5px"></div>
  <div class="vd" style="left:702.5px;top:755.5px;height:30px"></div>
  <div class="btn" style="left:743px;top:754.5px;width:72px;height:31.5px"></div>
  <div class="vd" style="left:782.8px;top:755.5px;height:30px"></div>
  <div class="t sb" style="left:473.4px;top:760px;font-size:12.9px;color:#374151">Preview</div>
  <div class="t sb" style="left:567.8px;top:760px;font-size:13.2px;color:#374151">Compile</div>
  <div class="t sb" style="left:665px;top:760px;font-size:13.4px;color:#374151">Build</div>
  <div class="t sb" style="left:752.5px;top:760px;font-size:13.6px;color:#374151">Lint</div>
  <svg class="a" style="left:0;top:0" width="1910" height="1048">
    <g fill="none" stroke="#374151" stroke-width="1.3" stroke-linecap="round" stroke-linejoin="round">
      <rect x="452.5" y="764.6" width="11.6" height="12.2" rx="1" fill="#374151" stroke="none"/>
      <g transform="translate(544.6,762.1) scale(0.7)" stroke-width="2"><path d="m18 16 4-4-4-4 M6 8l-4 4 4 4 M14.5 4l-5 16"/></g>
      <g transform="translate(642.15,761.65) scale(0.675)" stroke-width="1.9"><path d="M14.7 6.3a1 1 0 0 0 0 1.4l1.6 1.6a1 1 0 0 0 1.4 0l3.77-3.77a6 6 0 0 1-7.94 7.94l-6.91 6.91a2.12 2.12 0 0 1-3-3l6.91-6.91a6 6 0 0 1 7.94-7.94l-3.76 3.76z"/></g>
      <path d="M715.2,768.6 L718.6,772 L722,768.6 M795.2,768.6 L798.6,772 L802,768.6" stroke="#4b5563"/>
    </g>
    <g stroke="#fff" stroke-width="1"><path d="M452.5,768.3 L464.1,768.3 M452.5,772.2 L464.1,772.2 M452.5,776 L464.1,776 M456.6,768.3 L456.6,776.8 M460.4,768.3 L460.4,776.8"/></g>
  </svg>
  <div class="a" style="left:827.5px;top:748px;width:1px;height:47px;background:#eef0f2"></div>
  <div class="t sb" style="left:860.4px;top:760.2px;font-size:12.4px;color:#4b5563">Results</div>
  <div class="t sb" style="left:934.7px;top:760.2px;font-size:13.2px;color:#4b5563">Code quality</div>
  <div class="t sb" style="left:1040.5px;top:760.2px;font-size:13px;color:#4b5563">Compiled code</div>
  <div class="t sb" style="left:1160.5px;top:760.2px;font-size:12.5px;color:#374151">Lineage</div>
  <div class="a" style="left:1144px;top:792.5px;width:77px;height:2px;background:#656d79"></div>
  <div class="btn" style="left:1750.5px;top:755.3px;width:132px;height:31px"></div>
  <div class="t sb" style="left:1784px;top:760px;font-size:13.4px;color:#374151">dbt Copilot</div>
  <svg class="a" style="left:0;top:0" width="1910" height="1048">
    <g fill="none" stroke="#4b5563" stroke-width="1.3" stroke-linecap="round" stroke-linejoin="round">
      <path d="M1770,765 L1763.5,765 Q1762.6,765 1762.6,765.9 L1762.6,774.4 Q1762.6,775.3 1763.5,775.3 L1766,775.3 L1768.5,778 L1771,775.3 L1775,775.3 Q1775.9,775.3 1775.9,774.4 L1775.9,771"/>
      <path d="M1860.6,768.6 L1864,772 L1867.4,768.6"/>
    </g>
    <path d="M1773.4,763 L1774.2,765.4 L1776.6,766.2 L1774.2,767 L1773.4,769.4 L1772.6,767 L1770.2,766.2 L1772.6,765.4 Z" fill="#f07a5a"/>
    <path d="M1767,769 L1767.6,770.4 L1769,771 L1767.6,771.6 L1767,773 L1766.4,771.6 L1765,771 L1766.4,770.4 Z" fill="#4b5563"/>
  </svg>

  <!-- lineage graph -->
  <svg class="a" style="left:0;top:0" width="1910" height="1048">
    <g fill="none" stroke="#c9cdd3" stroke-width="1.1"><path d="M963.3,930.2 C973.6,930.2 973.6,930.2 984.0,930.2"/><path d="M1025.6,907.4 C1034.8,907.4 1034.8,960.9 1044.0,960.9"/><path d="M1018.8,930.2 C1031.4,930.2 1031.4,960.9 1044.0,960.9"/><path d="M1018.8,930.2 C1066.9,930.2 1066.9,941.8 1115.0,941.8"/><path d="M1021.4,953.3 C1032.7,953.3 1032.7,960.9 1044.0,960.9"/><path d="M1021.0,976.2 C1032.5,976.2 1032.5,960.9 1044.0,960.9"/><path d="M1079.9,960.9 C1097.5,960.9 1097.5,941.8 1115.0,941.8"/><path d="M1151.1,941.8 C1179.2,941.8 1179.2,881.0 1207.4,881.0"/><path d="M1151.1,941.8 C1179.1,941.8 1179.1,953.3 1207.1,953.3"/><path d="M1151.1,941.8 C1179.1,941.8 1179.1,976.2 1207.1,976.2"/><path d="M1235.0,881.0 C1262.7,881.0 1262.7,809.2 1290.3,809.2"/><path d="M1235.0,881.0 C1262.7,881.0 1262.7,832.2 1290.3,832.2"/><path d="M1235.0,881.0 C1262.7,881.0 1262.7,854.8 1290.3,854.8"/><path d="M1235.0,881.0 C1262.7,881.0 1262.7,878.0 1290.3,878.0"/><path d="M1235.0,881.0 C1262.7,881.0 1262.7,900.8 1290.3,900.8"/><path d="M1235.0,881.0 C1262.7,881.0 1262.7,923.8 1290.3,923.8"/><path d="M1235.0,881.0 C1262.7,881.0 1262.7,976.2 1290.3,976.2"/><path d="M1235.0,881.0 C1297.1,881.0 1297.1,855.0 1359.2,855.0"/><path d="M1318.9,809.2 C1339.1,809.2 1339.1,855.0 1359.2,855.0"/><path d="M1341.6,832.2 C1350.4,832.2 1350.4,855.0 1359.2,855.0"/><path d="M1327.7,854.8 C1343.5,854.8 1343.5,855.0 1359.2,855.0"/><path d="M1326.2,878.0 C1342.7,878.0 1342.7,855.0 1359.2,855.0"/><path d="M1327.0,900.8 C1343.1,900.8 1343.1,855.0 1359.2,855.0"/><path d="M1328.0,923.8 C1343.6,923.8 1343.6,855.0 1359.2,855.0"/><path d="M1241.9,953.3 C1266.1,953.3 1266.1,953.3 1290.3,953.3"/><path d="M1282.5,976.2 C1286.4,976.2 1286.4,976.2 1290.3,976.2"/><path d="M1325.0,976.2 C1342.2,976.2 1342.2,976.2 1359.5,976.2"/></g>
    <rect x="1115" y="961" width="66" height="12" rx="2" fill="#e9f8f0" opacity="0.7"/>
    <text x="1119" y="970.5" font-family="Liberation Sans" font-size="9.5" fill="#c8d0cc">test_supply...</text>
    <g font-family="Liberation Sans" font-size="9.6" fill="#3f4652"><rect x="921.0" y="921.8" width="41.8" height="16.9" rx="2" fill="#dbf2ec" stroke="#bde0d6" stroke-width="1"/><text fill="#34504a" stroke="#34504a" stroke-width="0.3" x="924.5" y="933.6">ecom....</text><rect x="984.4" y="898.8" width="40.7" height="17.2" rx="2" fill="#dcf0fa" stroke="#b9d9ea" stroke-width="1"/><text fill="#36424f" stroke="#36424f" stroke-width="0.3" x="987.9" y="910.8">stg_o...</text><rect x="984.5" y="921.8" width="33.8" height="16.9" rx="2" fill="#dcf0fa" stroke="#b9d9ea" stroke-width="1"/><text fill="#36424f" stroke="#36424f" stroke-width="0.3" x="988.0" y="933.6">stg_...</text><rect x="984.5" y="945.0" width="36.4" height="16.6" rx="2" fill="#dcf0fa" stroke="#b9d9ea" stroke-width="1"/><text fill="#36424f" stroke="#36424f" stroke-width="0.3" x="988.0" y="956.7">stg_...</text><rect x="984.5" y="967.7" width="36.0" height="16.9" rx="2" fill="#dcf0fa" stroke="#b9d9ea" stroke-width="1"/><text fill="#36424f" stroke="#36424f" stroke-width="0.3" x="988.0" y="979.6">stg_...</text><rect x="1044.5" y="952.6" width="34.9" height="16.6" rx="2" fill="#dcf0fa" stroke="#b9d9ea" stroke-width="1"/><text fill="#36424f" stroke="#36424f" stroke-width="0.3" x="1048.0" y="964.3">orde...</text><rect x="1116" y="933.3" width="34.1" height="17.1" rx="1.5" fill="#dcf0fa" stroke="#4a5260" stroke-width="2"/><text fill="#36424f" stroke="#36424f" stroke-width="0.3" x="1119.0" y="945.2">orders</text><rect x="1207.9" y="872.5" width="26.6" height="17.0" rx="2" fill="#ffd3db" stroke="#f0b5c0" stroke-width="1"/><text fill="#6a4550" stroke="#6a4550" stroke-width="0.3" x="1211.4" y="884.4">or...</text><rect x="1290.8" y="800.6" width="27.6" height="17.1" rx="2" fill="#fdf2cc" stroke="#e6d69c" stroke-width="1"/><text fill="#4d4634" stroke="#4d4634" stroke-width="0.3" x="1294.3" y="812.6">or...</text><rect x="1290.8" y="823.8" width="50.3" height="16.9" rx="2" fill="#fdf2cc" stroke="#e6d69c" stroke-width="1"/><text fill="#4d4634" stroke="#4d4634" stroke-width="0.3" x="1294.3" y="835.6">new_cu...</text><rect x="1290.8" y="846.5" width="36.4" height="16.6" rx="2" fill="#fdf2cc" stroke="#e6d69c" stroke-width="1"/><text fill="#4d4634" stroke="#4d4634" stroke-width="0.3" x="1294.3" y="858.2">larg...</text><rect x="1290.8" y="870.0" width="34.9" height="16.1" rx="2" fill="#fdf2cc" stroke="#e6d69c" stroke-width="1"/><text fill="#4d4634" stroke="#4d4634" stroke-width="0.3" x="1294.3" y="881.4">ord...</text><rect x="1290.8" y="892.7" width="35.7" height="16.2" rx="2" fill="#fdf2cc" stroke="#e6d69c" stroke-width="1"/><text fill="#4d4634" stroke="#4d4634" stroke-width="0.3" x="1294.3" y="904.2">food...</text><rect x="1290.8" y="915.9" width="36.7" height="15.9" rx="2" fill="#fdf2cc" stroke="#e6d69c" stroke-width="1"/><text fill="#4d4634" stroke="#4d4634" stroke-width="0.3" x="1294.3" y="927.2">drin...</text><rect x="1359.7" y="846.5" width="38.6" height="16.9" rx="2" fill="#e2e4e7" stroke="#cdd1d6" stroke-width="1"/><text fill="#444a52" stroke="#444a52" stroke-width="0.3" x="1363.2" y="858.4">orde...</text><rect x="1207.6" y="944.8" width="33.8" height="17.0" rx="2" fill="#dcf0fa" stroke="#b9d9ea" stroke-width="1"/><text fill="#36424f" stroke="#36424f" stroke-width="0.3" x="1211.1" y="956.7">cust...</text><rect x="1290.8" y="944.8" width="33.4" height="17.0" rx="2" fill="#ffd3db" stroke="#f0b5c0" stroke-width="1"/><text fill="#6a4550" stroke="#6a4550" stroke-width="0.3" x="1294.3" y="956.7">cus...</text><rect x="1207.6" y="967.9" width="74.4" height="16.6" rx="2" fill="#c9f4df" stroke="#a9e2c6" stroke-width="1"/><text fill="#2c5a47" stroke="#2c5a47" stroke-width="0.3" x="1211.1" y="979.6">test_order_it...</text><rect x="1290.8" y="967.9" width="33.7" height="16.6" rx="2" fill="#fdf2cc" stroke="#e6d69c" stroke-width="1"/><text fill="#4d4634" stroke="#4d4634" stroke-width="0.3" x="1294.3" y="979.6">ord...</text><rect x="1360.0" y="967.9" width="44.1" height="16.6" rx="2" fill="#fdf2cc" stroke="#e6d69c" stroke-width="1"/><text fill="#4d4634" stroke="#4d4634" stroke-width="0.3" x="1363.5" y="979.6">order_...</text></g>
    <g fill="#3a3f48"><path d="M1041,958.9 L1044.5,960.9 L1041,962.9 Z"/><path d="M1356,853 L1359.5,855 L1356,857 Z"/></g>
  </svg>
  <!-- lineage controls -->
  <div class="btn" style="left:1470.7px;top:820px;width:296px;height:40px;border-color:#a9aeb6;border-radius:6px"></div>
  <div class="vd" style="left:1661.8px;top:820.5px;height:39px;background:#a9aeb6"></div>
  <div class="t sb" style="left:1483px;top:828px;font-size:12.7px;color:#374151">2+orders+2</div>
  <div class="t sb" style="left:1673.8px;top:828px;font-size:12.9px;color:#374151">Update Graph</div>
  <div class="btn" style="left:1783.4px;top:820px;width:39.5px;height:40px;border-color:#a9aeb6;border-radius:7px"></div>
  <div class="btn" style="left:1831.2px;top:820px;width:39.5px;height:40px;border-color:#a9aeb6;border-radius:7px"></div>
  <svg class="a" style="left:0;top:0" width="1910" height="1048">
    <g fill="none" stroke="#374151" stroke-width="1.5" stroke-linecap="square">
      <path d="M1795.4,837 L1795.4,832.6 L1799.8,832.6 M1806,832.6 L1810.4,832.6 L1810.4,837 M1810.4,843 L1810.4,847.4 L1806,847.4 M1799.8,847.4 L1795.4,847.4 L1795.4,843"/>
    </g>
    <g fill="none" stroke="#374151" stroke-width="1.5" stroke-linecap="round" stroke-linejoin="round">
      <path d="M1857.6,841.2 A6.9,6.9 0 1 1 1853.8,834"/></g>
    <path d="M1853.2,831.2 L1857.4,834.6 L1853,837.2 Z" fill="#374151"/>
    <!-- hand cursor -->
    <path d="M1773.2,804 Q1770.8,802 1772,800.4 Q1773.4,799.2 1775,800.8 L1775.4,799 Q1775.8,797.2 1777.4,797.5 Q1778.6,797.8 1778.6,799.2 L1779,797.6 Q1779.5,796 1781,796.4 Q1782.2,796.9 1781.9,798.4 Q1782.6,797 1784,797.5 Q1785.2,798.1 1784.8,799.6 Q1785.8,799.2 1786.6,800 Q1787.5,800.9 1787,802.6 L1786.2,806.8 Q1785.4,810.6 1782.4,812.2 L1778.6,812.9 Q1776,812.7 1774.9,810.2 Z" fill="#fff" stroke="#2a2a2a" stroke-width="1.1" stroke-linejoin="round"/>
    <path d="M1777.6,807.5 L1777.6,809.8 M1779.3,807.2 L1779.3,809.6 M1781,807 L1781,809.4 M1782.7,806.8 L1782.7,809.2" stroke="#777" stroke-width="1"/>
  </svg>
  <!-- status bar -->
  <div class="a" style="left:101px;top:991px;width:1px;height:40px;background:#e5e7eb"></div>
  <svg class="a" style="left:0;top:0" width="1910" height="1048">
    <path d="M78.4,1012.2 L82,1008.6 L85.6,1012.2" fill="none" stroke="#4b5563" stroke-width="1.3" stroke-linecap="round" stroke-linejoin="round"/>
  </svg>
  <div class="t sb" style="left:118px;top:1000.5px;font-size:13.2px;color:#6b7280">dbt build --select &lt;model_name&gt;</div>
  <div class="a" style="left:1524px;top:1002.2px;width:40px;height:19.5px;border-radius:10px;background:#1b6b6c"></div>
  <div class="a" style="left:1546.5px;top:1004.4px;width:15px;height:15px;border-radius:50%;background:#fff"></div>
  <svg class="a" style="left:0;top:0" width="1910" height="1048">
    <path d="M1531.8,1012.2 L1534.2,1014.6 L1538.6,1009.8" fill="none" stroke="#fff" stroke-width="1.4" stroke-linecap="round" stroke-linejoin="round"/>
    <circle cx="1752" cy="1011.6" r="5.8" fill="none" stroke="#a3a8b0" stroke-width="1.1"/>
    <path d="M1750,1010 Q1750,1008 1752,1008 Q1754,1008 1754,1009.8 Q1754,1011 1752,1011.8 L1752,1012.8" fill="none" stroke="#a3a8b0" stroke-width="1.1"/>
    <circle cx="1752" cy="1014.6" r="0.6" fill="#a3a8b0"/>
  </svg>
  <div class="t" style="left:1575.8px;top:1000px;font-size:12.6px;font-weight:700;color:#4a505a">Defer to staging/production</div>
  <div class="a" style="left:1770.2px;top:999.7px;width:75.5px;height:24px;border-radius:12px;background:#cdf5e2"></div>
  <svg class="a" style="left:0;top:0" width="1910" height="1048">
    <circle cx="1789" cy="1011.7" r="5.6" fill="none" stroke="#3d8a6c" stroke-width="1.3"/>
  </svg>
  <div class="t sb" style="left:1801.6px;top:1000px;font-size:11.4px;color:#3d8a6c">Ready</div>
  <div class="btn" style="left:1852.9px;top:996.5px;width:34px;height:31px;border-color:#9ca3af;border-radius:6px"></div>
  <svg class="a" style="left:0;top:0" width="1910" height="1048">
    <g fill="#1f2937"><circle cx="1864.6" cy="1012" r="1.5"/><circle cx="1869.8" cy="1012" r="1.5"/><circle cx="1875" cy="1012" r="1.5"/></g>
  </svg>
</div>
</body></html>
